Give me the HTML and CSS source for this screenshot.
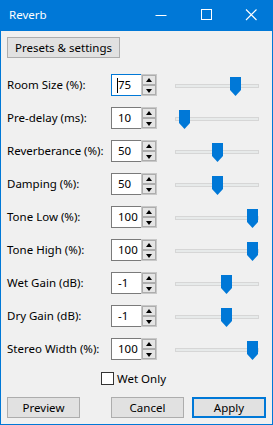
FILE: index.html
```html
<!DOCTYPE html>
<html>
<head>
<meta charset="utf-8">
<link rel="stylesheet" href="styles.css">
</head>
<body>
<div class="window">
  <div class="titlebar">
    <span class="title">Reverb</span>
    <div class="controls">
      <span class="ctl"><svg width="12" height="12" viewBox="0 0 12 12"><path d="M0.5 6.5H11.5" stroke="#fff" stroke-width="1"/></svg></span>
      <span class="ctl"><svg width="12" height="12" viewBox="0 0 12 12"><rect x="1.5" y="0.5" width="10" height="10" fill="none" stroke="#fff" stroke-width="1"/></svg></span>
      <span class="ctl"><svg width="12" height="12" viewBox="0 0 12 12"><path d="M1 0.5L11.5 11M11.5 0.5L1 11" stroke="#fff" stroke-width="1.1"/></svg></span>
    </div>
  </div>
  <div class="content">
    <div class="top"><button class="btn presets">Presets &amp; settings</button></div>
    <div class="params">
      <div class="label">Room Size (%):</div>
      <div class="spin focused"><div class="field"><span class="caret"></span>75</div><div class="arrows"><span class="arr up"></span><span class="arr down"></span></div></div>
      <div class="slider"><div class="track"></div><div class="thumb" style="left:73px"></div></div>

      <div class="label">Pre-delay (ms):</div>
      <div class="spin"><div class="field">10</div><div class="arrows"><span class="arr up"></span><span class="arr down"></span></div></div>
      <div class="slider"><div class="track"></div><div class="thumb" style="left:22px"></div></div>

      <div class="label">Reverberance (%):</div>
      <div class="spin"><div class="field">50</div><div class="arrows"><span class="arr up"></span><span class="arr down"></span></div></div>
      <div class="slider"><div class="track"></div><div class="thumb" style="left:55px"></div></div>

      <div class="label">Damping (%):</div>
      <div class="spin"><div class="field">50</div><div class="arrows"><span class="arr up"></span><span class="arr down"></span></div></div>
      <div class="slider"><div class="track"></div><div class="thumb" style="left:55px"></div></div>

      <div class="label">Tone Low (%):</div>
      <div class="spin"><div class="field">100</div><div class="arrows"><span class="arr up"></span><span class="arr down"></span></div></div>
      <div class="slider"><div class="track"></div><div class="thumb" style="left:90px"></div></div>

      <div class="label">Tone High (%):</div>
      <div class="spin"><div class="field">100</div><div class="arrows"><span class="arr up"></span><span class="arr down"></span></div></div>
      <div class="slider"><div class="track"></div><div class="thumb" style="left:90px"></div></div>

      <div class="label">Wet Gain (dB):</div>
      <div class="spin"><div class="field">-1</div><div class="arrows"><span class="arr up"></span><span class="arr down"></span></div></div>
      <div class="slider"><div class="track"></div><div class="thumb" style="left:64px"></div></div>

      <div class="label">Dry Gain (dB):</div>
      <div class="spin"><div class="field">-1</div><div class="arrows"><span class="arr up"></span><span class="arr down"></span></div></div>
      <div class="slider"><div class="track"></div><div class="thumb" style="left:64px"></div></div>

      <div class="label">Stereo Width (%):</div>
      <div class="spin"><div class="field">100</div><div class="arrows"><span class="arr up"></span><span class="arr down"></span></div></div>
      <div class="slider"><div class="track"></div><div class="thumb" style="left:90px"></div></div>
    </div>
    <div class="wet"><span class="check"></span><span>Wet Only</span></div>
    <div class="buttons">
      <button class="btn act">Preview</button>
      <div class="right">
        <button class="btn act">Cancel</button>
        <button class="btn act default">Apply</button>
      </div>
    </div>
  </div>
</div>
</body>
</html>
```
FILE: styles.css
```css
* { box-sizing: border-box; }
html, body { margin: 0; padding: 0; }
body {
  width: 273px;
  height: 425px;
  font-family: "Noto Sans", "Open Sans", sans-serif;
  font-size: 11.5px;
  color: #000;
  background: #f0f0f0;
}
.window {
  width: 273px;
  height: 425px;
  border: 1px solid #0078d7;
  border-top: none;
  background: #f0f0f0;
  display: flex;
  flex-direction: column;
}
.titlebar {
  height: 31px;
  margin: 0 -1px;
  background: #0078d7;
  color: #fff;
  display: flex;
  align-items: center;
  justify-content: space-between;
  padding-left: 9px;
}
.title { font-size: 11.5px; line-height: 16px; margin-top: -2px; }
.controls { display: flex; height: 31px; }
.ctl {
  width: 45px;
  height: 31px;
  display: flex;
  align-items: center;
  justify-content: center;
}
.ctl svg { display: block; margin-top: -1px; }
.content {
  padding: 6px 6px 0 6px;
  flex: 1;
  display: flex;
  flex-direction: column;
}
.btn {
  font-family: inherit;
  font-size: 11.5px;
  color: #000;
  background: #e1e1e1;
  border: 1px solid #adadad;
  margin: 0;
  padding: 0;
  height: 21px;
  line-height: 17px;
}
.presets { width: 113px; }
.params {
  margin-top: 16px;
  display: grid;
  grid-template-columns: 104px 46px 1fr;
  grid-auto-rows: 22px;
  row-gap: 11px;
}
.label {
  line-height: 22px;
  white-space: nowrap;
}
.spin { display: flex; height: 22px; }
.field {
  width: 30px;
  height: 22px;
  background: #fff;
  border: 1px solid #7a7a7a;
  border-right: none;
  line-height: 20px;
  padding-left: 6px;
  position: relative;
}
.focused .field { border-color: #0078d7; }
.caret {
  position: absolute;
  left: 5px;
  top: 3px;
  width: 1px;
  height: 15px;
  background: #000;
}
.arrows {
  width: 16px;
  height: 22px;
  border: 1px solid #c8c8c8;
  background: #f0f0f0;
  display: flex;
  flex-direction: column;
  justify-content: space-between;
}
.arr {
  height: 10px;
  border: 1px solid #adadad;
  background: #e5e5e5;
  position: relative;
}
.arr::after {
  content: "";
  position: absolute;
  left: 3px;
  width: 0;
  height: 0;
  border-left: 3.5px solid transparent;
  border-right: 3.5px solid transparent;
}
.up::after { top: 2px; border-bottom: 4px solid #000; }
.down::after { top: 3px; border-top: 4px solid #000; }
.slider { position: relative; height: 22px; }
.track {
  position: absolute;
  left: 18px;
  top: 10px;
  width: 84px;
  height: 4px;
  background: #e7eaea;
  border: 1px solid #d6d6d6;
}
.thumb {
  position: absolute;
  top: 3px;
  width: 11px;
  height: 19px;
  background: #0078d7;
  clip-path: polygon(0 0, 100% 0, 100% 68%, 50% 100%, 0 68%);
}
.wet {
  margin-top: 12px;
  margin-left: 94px;
  display: flex;
  align-items: center;
  height: 13px;
  gap: 3px;
}
.check {
  width: 13px;
  height: 13px;
  border: 1px solid #333;
  background: #fff;
}
.buttons {
  margin-top: 12px;
  display: flex;
  justify-content: space-between;
  padding-right: 0;
}
.right { display: flex; gap: 8px; }
.act { width: 73px; }
.default { border: 2px solid #0078d7; width: 74px; }
```
